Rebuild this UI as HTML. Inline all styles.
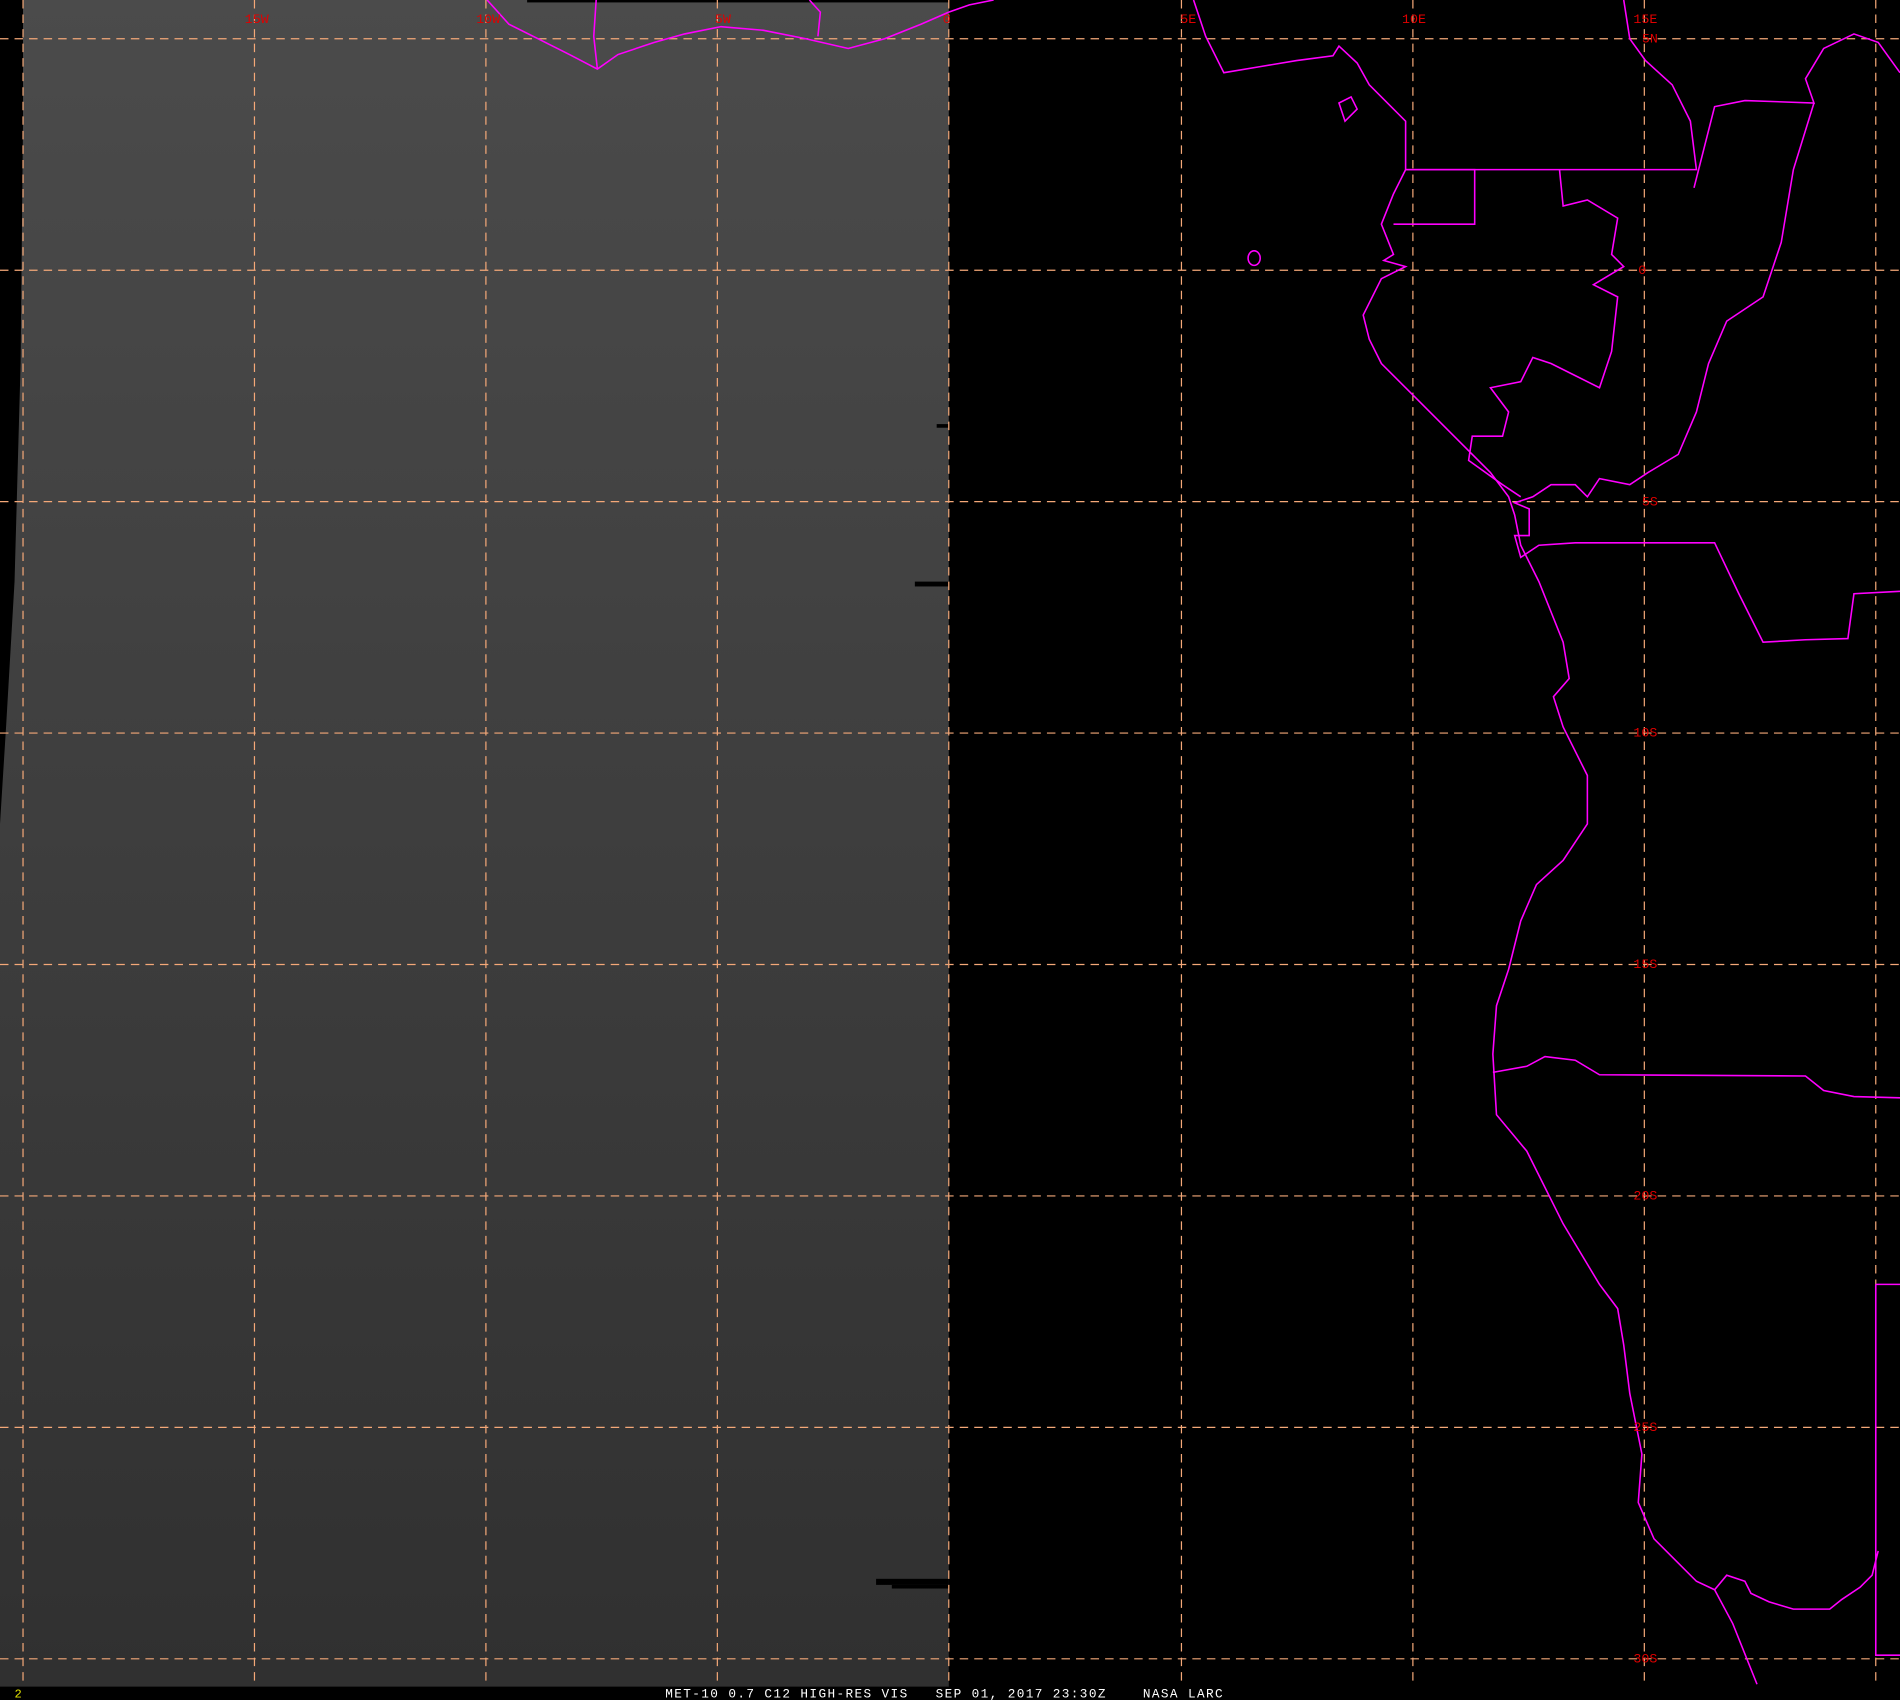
<!DOCTYPE html>
<html><head><style>html,body{margin:0;padding:0;background:#000;overflow:hidden}svg{display:block}</style></head><body>
<svg width="1900" height="1700" viewBox="0 0 1568 1403" preserveAspectRatio="none" xmlns="http://www.w3.org/2000/svg">
<defs><linearGradient id="g" x1="0" y1="0" x2="0" y2="1"><stop offset="0" stop-color="#4b4b4b"/><stop offset="1" stop-color="#303030"/></linearGradient></defs>
<rect width="1568" height="1403" fill="#000"/>
<path d="M19 0 L783 0 L783 1392 L0 1392 L0 680 L5 600 L12 480 L17 300 L19 100 Z" fill="url(#g)"/>
<rect x="435" y="0" width="348" height="2" fill="#000"/>
<rect x="773" y="350" width="10" height="3" fill="#000"/>
<rect x="755" y="480" width="28" height="4" fill="#000"/>
<rect x="723" y="1303" width="60" height="5" fill="#000"/>
<rect x="736" y="1308" width="47" height="3" fill="#000"/>
<g stroke="#f4a878" stroke-width="1" stroke-dasharray="7,5" fill="none">
<path d="M19 0V1392M210 0V1392M401 0V1392M592 0V1392M783 0V1392M975 0V1392M1166 0V1392M1357 0V1392M1548 0V1392"/>
<path d="M0 32H1568M0 223H1568M0 414H1568M0 605H1568M0 796H1568M0 987H1568M0 1178H1568M0 1369H1568"/>
</g>
<g stroke="#ff00ff" stroke-width="1.3" fill="none">
<path d="M402 0 L420 20 L440 30 L470 45 L493 57 L510 45 L540 35 L565 28 L595 22 L630 25 L665 32 L700 40 L730 32 L760 20 L783 10"/>
<path d="M492 0 L490 30 L493 57"/>
<path d="M668 0 L677 10 L675 30"/>
<path d="M783 10 L800 4 L820 0"/>
<path d="M985 0 L995 30 L1010 60 L1040 55 L1070 50 L1100 46 L1105 38 L1120 52 L1130 70 L1150 90 L1160 100 L1160 140 L1150 160 L1140 185 L1150 210 L1142 215 L1160 220 L1140 230 L1125 260 L1130 280 L1140 300 L1170 330 L1200 360 L1230 390 L1245 410 L1250 425 L1255 450 L1270 480 L1290 530 L1295 560 L1282 575 L1290 600 L1310 640 L1310 680 L1290 710 L1268 730 L1255 760 L1245 800 L1235 830 L1232 870 L1235 920 L1260 950 L1290 1010 L1320 1060 L1335 1080 L1340 1110 L1345 1150 L1355 1200 L1352 1240 L1365 1270 L1385 1290 L1400 1305 L1415 1312 L1425 1300 L1440 1305 L1445 1315 L1460 1322 L1480 1328 L1510 1328 L1520 1320 L1535 1310 L1545 1300 L1550 1280"/>
<path d="M1160 140 H1217 V185 H1150"/>
<path d="M1160 140 H1400 L1395 100 L1380 70 L1358 50 L1345 32 L1340 0"/>
<path d="M1287 140 L1290 170 L1310 165 L1335 180 L1330 210 L1340 220 L1315 235 L1335 245 L1330 290 L1320 320 L1300 310 L1280 300 L1265 295 L1255 315 L1230 320 L1245 340 L1240 360 L1215 360 L1212 380 L1240 400 L1255 410"/>
<path d="M1398 155 L1415 88 L1440 83 L1497 85 L1490 65 L1505 40 L1530 28 L1550 35 L1568 60"/>
<path d="M1497 85 L1480 140 L1470 200 L1455 245 L1425 265 L1410 300 L1400 340 L1385 375 L1360 390 L1345 400 L1320 395 L1310 410 L1300 400 L1280 400 L1265 410 L1250 415 L1262 420 L1262 442 L1250 442 L1255 460 L1270 450 L1300 448 L1415 448 L1435 490 L1455 530 L1490 528 L1525 527 L1530 490 L1568 488"/>
<path d="M1232 885 L1260 880 L1275 872 L1300 875 L1320 887 L1490 888 L1505 900 L1530 905 L1568 906"/>
<path d="M1548 1060 V1366 H1568 M1548 1060 H1568"/>
<path d="M1415 1312 L1430 1340 L1450 1390"/>
<path d="M1105 85 L1115 80 L1120 90 L1110 100 Z"/>
<ellipse cx="1035" cy="213" rx="5" ry="6"/>
</g>
<g fill="#e00000" font-family="Liberation Mono, monospace" font-size="11">
<text x="202" y="19">15W</text><text x="393" y="19">10W</text><text x="590" y="19">5W</text><text x="778" y="19">0</text><text x="974" y="19">5E</text><text x="1157" y="19">10E</text><text x="1348" y="19">15E</text>
<text x="1355" y="35">5N</text><text x="1352" y="226">0</text><text x="1355" y="417">5S</text><text x="1348" y="608">10S</text><text x="1348" y="799">15S</text><text x="1348" y="990">20S</text><text x="1348" y="1181">25S</text><text x="1348" y="1372">30S</text>
</g>
<text x="12" y="1401" fill="#e0e000" font-family="Liberation Mono, monospace" font-size="10">2</text>
<text x="549" y="1401" fill="#fff" font-family="Liberation Mono, monospace" font-size="10.5" style="white-space:pre" xml:space="preserve" textLength="460" lengthAdjust="spacing">MET-10 0.7 C12 HIGH-RES VIS   SEP 01, 2017 23:30Z    NASA LARC</text>
</svg>
</body></html>
